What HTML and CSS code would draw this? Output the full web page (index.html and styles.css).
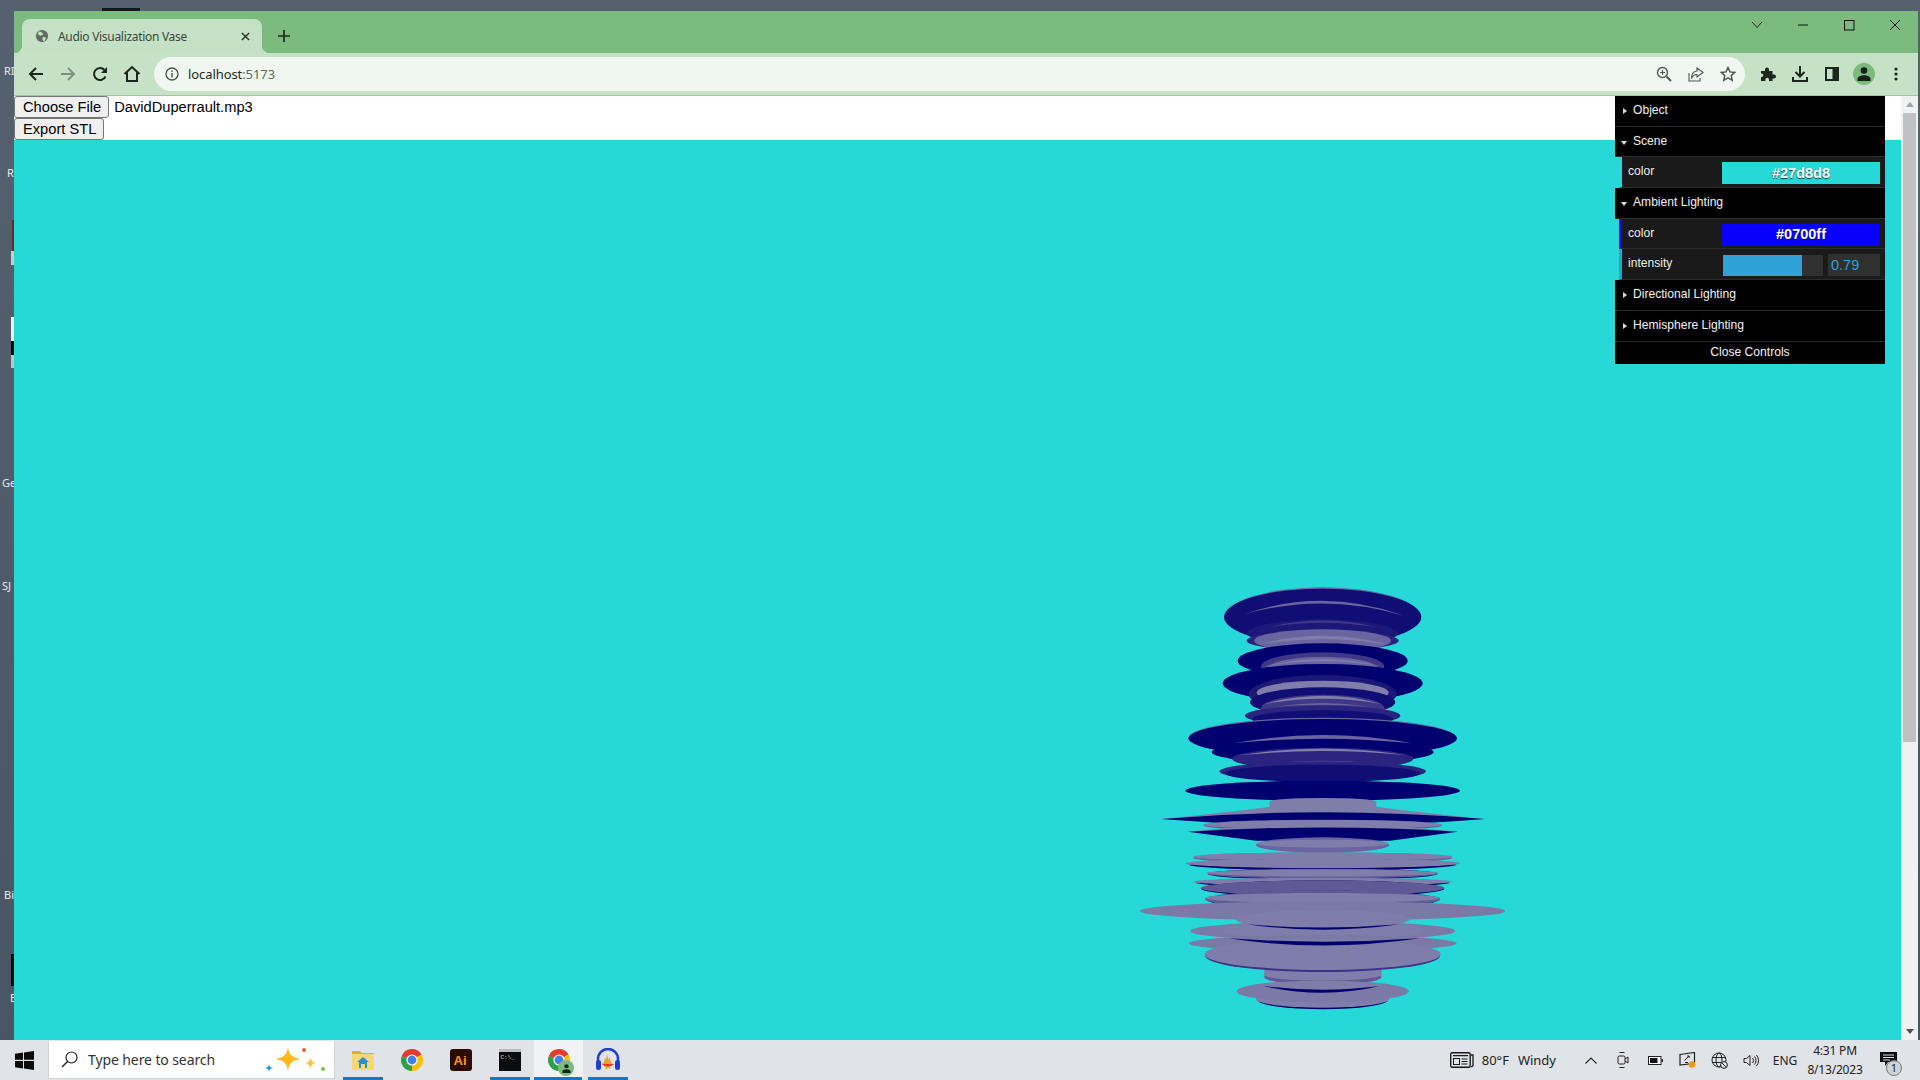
FILE: index.html
```html
<!DOCTYPE html>
<html lang="en">
<head>
<meta charset="utf-8">
<title>Audio Visualization Vase</title>
<link rel="stylesheet" href="styles.css">
</head>
<body>
<svg class="defs" width="0" height="0" aria-hidden="true">
  <symbol id="chrome" viewBox="0 0 24 24">
    <path fill="#e33b2e" d="M12 12L1.66 8.24A11 11 0 0 1 21.53 6.5Z"/>
    <path fill="#f9c10d" d="M12 12L21.53 6.5A11 11 0 0 1 12 23Z"/>
    <path fill="#2fa04a" d="M12 12L12 23A11 11 0 0 1 1.66 8.24Z"/>
    <circle cx="12" cy="12" r="5.6" fill="#fff"/>
    <circle cx="12" cy="12" r="4.4" fill="#3f80ea"/>
  </symbol>
</svg>
<div class="desktop">
  <div class="desk-area">
    <span class="desk-label label-a">RI</span>
    <span class="desk-label label-b">R</span>
    <span class="desk-label label-c">Ge</span>
    <span class="desk-label label-d">SJ</span>
    <span class="desk-label label-e">Bi</span>
    <span class="desk-label label-f">E</span>
    <i class="desk-bit bit-top"></i>
    <i class="desk-bit bit-red"></i>
    <i class="desk-bit bit-white1"></i>
    <i class="desk-bit bit-white2"></i>
    <i class="desk-bit bit-black1"></i>
    <i class="desk-bit bit-white3"></i>
    <i class="desk-bit bit-black2"></i>

    <main class="browser">
      <div class="tabstrip">
        <div class="tab">
          <svg class="favicon" viewBox="0 0 16 16"><circle cx="8" cy="8" r="7" fill="#5f6b63"/><path fill="#c5e1c5" d="M5 2.5l3 1.5 1.500 2-2 1.500-3-.5-1.500-1.500zM9 9l3.500.5-1 3.500-2 1-1-2.500z"/></svg>
          <span class="tab-title">Audio Visualization Vase</span>
          <svg class="tab-close" viewBox="0 0 10 10"><path d="M1 1l8 8M9 1l-8 8" stroke="#2a2f2b" stroke-width="1.600" fill="none"/></svg>
        </div>
        <svg class="new-tab" viewBox="0 0 12 12"><path d="M6 0v12M0 6h12" stroke="#1f2a20" stroke-width="1.700" fill="none"/></svg>
        <div class="win-controls">
          <span class="win-btn"><svg width="12" height="8" viewBox="0 0 12 8"><path d="M1 1l5 5.500L11 1" stroke="#1f2a20" fill="none"/></svg></span>
          <span class="win-btn"><svg width="12" height="2" viewBox="0 0 12 2"><path d="M1 1h10" stroke="#111" fill="none"/></svg></span>
          <span class="win-btn"><svg width="11" height="11" viewBox="0 0 11 11"><rect x=".5" y=".5" width="9.500" height="9.500" stroke="#111" fill="none"/></svg></span>
          <span class="win-btn"><svg width="12" height="12" viewBox="0 0 12 12"><path d="M1 1l10 10M11 1L1 11" stroke="#111" fill="none"/></svg></span>
        </div>
      </div>

      <div class="toolbar">
        <span class="tool"><svg width="16" height="16" viewBox="0 0 16 16"><path d="M15 8H2M8 2L2 8l6 6" stroke="#1d261e" stroke-width="2" fill="none"/></svg></span>
        <span class="tool"><svg width="16" height="16" viewBox="0 0 16 16"><path d="M1 8h13M8 2l6 6-6 6" stroke="#7f8f80" stroke-width="2" fill="none"/></svg></span>
        <span class="tool"><svg width="16" height="16" viewBox="0 0 16 16"><path d="M13.500 10.500A6 6 0 1 1 12.500 4" stroke="#1d261e" stroke-width="2" fill="none"/><path fill="#1d261e" d="M15 1v6H9z"/></svg></span>
        <span class="tool"><svg width="18" height="18" viewBox="0 0 18 18"><path d="M1.500 9L9 2l7.500 7M4 7.500V16h10V7.500" stroke="#1d261e" stroke-width="2" fill="none"/></svg></span>
        <div class="omnibox">
          <svg class="info" width="14" height="14" viewBox="0 0 14 14"><circle cx="7" cy="7" r="6" stroke="#47524a" stroke-width="1.300" fill="none"/><path d="M7 6v4.500M7 3.500v1.500" stroke="#47524a" stroke-width="1.400"/></svg>
          <span class="url">localhost<span class="url-port">:5173</span></span>
          <span class="omni-icon"><svg width="16" height="16" viewBox="0 0 16 16"><circle cx="6.500" cy="6.500" r="5" stroke="#4d5a50" stroke-width="1.400" fill="none"/><path d="M10.500 10.500L15 15" stroke="#4d5a50" stroke-width="2"/><path d="M6.500 4v5M4 6.500h5" stroke="#4d5a50" stroke-width="1.200"/></svg></span>
          <span class="omni-icon"><svg width="16" height="16" viewBox="0 0 16 16"><path d="M1 7v8h11v-3" stroke="#4d5a50" stroke-width="1.100" fill="none"/><path d="M9 2l6 4.500-6 4.500V8.500C6 8.500 4.500 10 3.500 12.500 3.500 8 5.500 5.200 9 5z" stroke="#4d5a50" stroke-width="1.100" fill="none"/></svg></span>
          <span class="omni-icon"><svg width="16" height="16" viewBox="0 0 16 16"><path d="M8 1.500l2 4.400 4.800.5-3.600 3.200 1 4.700L8 11.900l-4.200 2.400 1-4.700L1.200 6.400 6 5.900z" stroke="#4d5a50" stroke-width="1.500" fill="none"/></svg></span>
        </div>
        <span class="tool tool-ext"><svg width="16" height="16" viewBox="0 0 16 16"><path fill="#1d261e" d="M1 5h4V3.500a2 2 0 0 1 4 0V5h3.500v3.500H14a2 2 0 0 1 0 4h-1.500V15H9v-1.500a1.800 1.800 0 0 0-3.600 0V15H1v-4h1.200a2 2 0 0 0 0-3.500H1z"/></svg></span>
        <span class="tool"><svg width="16" height="16" viewBox="0 0 16 16"><path d="M8 0v10M3.500 6L8 10.500 12.500 6" stroke="#1d261e" stroke-width="2" fill="none"/><path d="M1 11v4h14v-4" stroke="#1d261e" stroke-width="2" fill="none"/></svg></span>
        <span class="tool"><svg width="14" height="14" viewBox="0 0 14 14"><rect width="14" height="14" fill="#1d261e"/><rect x="2" y="2" width="5.500" height="10" fill="#c6e2c6"/></svg></span>
        <span class="tool"><span class="avatar"><svg width="14" height="14" viewBox="0 0 14 14"><circle cx="7" cy="3.500" r="3.300" fill="#17221a"/><path fill="#17221a" d="M.5 14v-2c0-2.500 3.500-3.700 6.500-3.700s6.500 1.200 6.500 3.700v2z"/></svg></span></span>
        <span class="tool"><svg width="4" height="14" viewBox="0 0 4 14"><circle cx="2" cy="2" r="1.600" fill="#1d261e"/><circle cx="2" cy="7" r="1.600" fill="#1d261e"/><circle cx="2" cy="12" r="1.600" fill="#1d261e"/></svg></span>
      </div>

      <div class="page">
        <div class="viewport">
          <header class="controls">
            <div class="line"><button class="native-btn" type="button">Choose File</button><span class="file-name">DavidDuperrault.mp3</span></div>
            <div class="line"><button class="native-btn" type="button">Export STL</button></div>
          </header>
          <section class="scene">
            <svg class="vase" viewBox="0 0 1260 1410" aria-label="Audio visualization vase">
              <!-- upper stack -->
              <ellipse class="q" cx="608" cy="138" rx="290" ry="86"/>
              <ellipse class="n" cx="608" cy="141" rx="296" ry="85"/>
              <path class="q" d="M372 133Q608 50 852 137Q608 66 372 133Z"/>
              <ellipse class="c1" cx="608" cy="190" rx="225" ry="42"/>
              <path class="p" d="M445 172Q608 130 772 172Q608 144 445 172Z"/>
              <ellipse class="m" cx="608" cy="212" rx="228" ry="30"/>
              <ellipse class="q" cx="608" cy="212" rx="205" ry="34"/>
              <path class="l" d="M410 225Q608 170 806 225Q608 190 410 225Z"/>

              <ellipse class="d" cx="608" cy="272" rx="255" ry="52"/>
              <ellipse class="p" cx="608" cy="290" rx="185" ry="43"/>
              <ellipse class="q" cx="608" cy="300" rx="170" ry="40"/>
              <path class="l" d="M430 290Q608 244 790 290Q608 258 430 290Z"/>

              <ellipse class="d" cx="608" cy="340" rx="300" ry="58"/>
              <ellipse class="c1" cx="608" cy="372" rx="222" ry="57"/>
              <ellipse class="l" cx="608" cy="368" rx="198" ry="36"/>
              <ellipse class="n" cx="608" cy="396" rx="218" ry="44"/>
              <ellipse class="p" cx="608" cy="414" rx="185" ry="40"/>
              <path class="l" d="M432 402Q608 352 786 402Q608 370 432 402Z"/>
              <path class="q" d="M470 410Q608 388 745 410Q608 398 470 410Z"/>
              <ellipse class="m" cx="608" cy="437" rx="233" ry="30"/>
              <ellipse class="n" cx="608" cy="447" rx="212" ry="26"/>

              <ellipse class="q" cx="608" cy="503" rx="400" ry="60"/>
              <ellipse class="d" cx="608" cy="505" rx="403" ry="58"/>
              <path class="q" d="M340 520Q608 470 878 520Q608 492 340 520Z"/>
              <ellipse class="d" cx="608" cy="546" rx="333" ry="36"/>
              <ellipse class="m" cx="608" cy="566" rx="272" ry="33"/>
              <path class="l" d="M360 556Q608 515 860 556Q608 530 360 556Z"/>
              <path class="q" d="M380 590Q608 555 840 590Q608 570 380 590Z"/>
              <ellipse class="m" cx="608" cy="604" rx="310" ry="30"/>
              <ellipse class="n" cx="608" cy="610" rx="292" ry="26"/>
              <ellipse class="d" cx="608" cy="662" rx="412" ry="30"/>

              <!-- neck and flare -->
              <ellipse class="l" cx="608" cy="695" rx="160" ry="11"/>
              <rect class="l" x="449" y="695" width="320" height="40"/>
              <g transform="translate(0 690)">
                <path class="l" d="M124 57Q400 28 450 20H770Q820 28 1094 57Q608 90 124 57Z"/>
                <path class="d" d="M124 57Q608 17 1094 57Q608 97 124 57Z"/>
                <ellipse class="c2" cx="608" cy="76" rx="358" ry="17"/>
                <ellipse class="l" cx="608" cy="74" rx="358" ry="14"/>
                <path class="l" d="M204 95Q608 50 1014 95Q608 100 204 95Z"/>
                <path class="d" d="M204 95Q608 70 1014 95L810 122H408Z"/>
                <ellipse class="q" cx="608" cy="135" rx="200" ry="23"/>
                <ellipse class="l" cx="608" cy="131" rx="198" ry="12"/>

                <!-- lower plates -->
                <ellipse class="q" cx="608" cy="174" rx="389" ry="17"/>
                <ellipse class="l" cx="608" cy="170" rx="389" ry="13"/>
                <ellipse class="d" cx="608" cy="194" rx="400" ry="17"/>
                <ellipse class="l" cx="608" cy="190" rx="413" ry="14"/>
                <ellipse class="d" cx="608" cy="222" rx="344" ry="17"/>
                <ellipse class="c2" cx="608" cy="221" rx="346" ry="15"/>
                <ellipse class="l" cx="608" cy="219" rx="346" ry="11"/>
                <ellipse class="d" cx="608" cy="248" rx="380" ry="14"/>
                <ellipse class="l" cx="608" cy="245" rx="388" ry="12"/>
                <ellipse class="d" cx="608" cy="266" rx="365" ry="25"/>
                <ellipse class="c2" cx="608" cy="264" rx="365" ry="23"/>
                <ellipse class="d" cx="608" cy="300" rx="345" ry="28"/>
                <ellipse class="c2" cx="608" cy="298" rx="353" ry="27"/>
                <ellipse class="l" cx="608" cy="294" rx="353" ry="15"/>

                <!-- foot: painted first so the big plates lie over its top -->
                <ellipse class="d" cx="608" cy="600" rx="195" ry="28"/>
                <ellipse class="l" cx="608" cy="597" rx="200" ry="26"/>
                <ellipse class="l2" cx="608" cy="574" rx="258" ry="33"/>
                <rect class="l" x="433" y="505" width="352" height="30"/>
                <ellipse class="c2" cx="608" cy="532" rx="175" ry="22"/>
                <ellipse class="l" cx="608" cy="524" rx="175" ry="18"/>
                <ellipse class="l" cx="608" cy="556" rx="175" ry="14"/>
                <path class="d" d="M430 558Q608 598 780 558Q608 580 430 558Z"/>

                <!-- wide pale plates -->
                <ellipse class="l2" cx="608" cy="333" rx="548" ry="29"/>
                <ellipse class="l" cx="608" cy="358" rx="260" ry="29"/>
                <ellipse class="l2" cx="608" cy="393" rx="398" ry="29"/>
                <ellipse class="l" cx="608" cy="390" rx="300" ry="30"/>
                <path class="d" d="M380 373Q608 405 840 373Q608 392 380 373Z"/>
                <ellipse class="l2" cx="608" cy="430" rx="402" ry="25"/>
                <ellipse class="c3" cx="608" cy="468" rx="352" ry="48"/>
                <ellipse class="l" cx="608" cy="463" rx="354" ry="47"/>
                <path class="d" d="M325 415Q608 458 900 415Q608 435 325 415Z"/>
              </g>
            </svg>
          </section>

          <aside class="gui">
            <div class="folder">Object</div>
            <div class="folder open folder-short">Scene</div>
            <ul class="rows">
              <li class="row row-teal"><span class="row-label">color</span><span class="swatch swatch-teal">#27d8d8</span></li>
            </ul>
            <div class="folder open">Ambient Lighting</div>
            <ul class="rows">
              <li class="row row-blue"><span class="row-label">color</span><span class="swatch swatch-blue">#0700ff</span></li>
              <li class="row row-number">
                <span class="row-label">intensity</span>
                <span class="slider"><span class="slider-fg"></span></span>
                <span class="number">0.79</span>
              </li>
            </ul>
            <div class="folder">Directional Lighting</div>
            <div class="folder">Hemisphere Lighting</div>
            <div class="close-btn">Close Controls</div>
          </aside>
        </div>
        <div class="scrollbar">
          <span class="arrow arrow-up"></span>
          <span class="thumb"></span>
          <span class="arrow arrow-down"></span>
        </div>
      </div>
    </main>
  </div>

  <footer class="taskbar">
    <span class="start"><svg width="19" height="19" viewBox="0 0 19 19"><path fill="#0b0b0b" d="M0 2.700L8 1.500v7.300H0zM9 1.400L19 0v8.800H9zM0 10h8v7.400L0 16.300zM9 10h10v9L9 17.600z"/></svg></span>
    <div class="search">
      <svg width="17" height="17" viewBox="0 0 17 17"><circle cx="10.500" cy="6.500" r="5.500" stroke="#222" stroke-width="1.200" fill="none"/><path d="M6.500 10.500L1 16" stroke="#222" stroke-width="1.400"/></svg>
      <span class="search-text">Type here to search</span>
      <svg class="sparkles" width="62" height="36" viewBox="0 0 62 36">
        <path fill="#fbb81f" d="M25 5c1 7.500 4 10.500 12 12-8 1.500-11 4.500-12 12-1-7.500-4-10.500-12-12 8-1.500 11-4.500 12-12z"/>
        <path fill="#fbc53f" d="M47.500 15c.6 4 1.800 5.200 5.500 6-3.700.8-4.900 2-5.500 6-.6-4-1.800-5.200-5.500-6 3.700-.8 4.900-2 5.500-6z"/>
        <path fill="#2196e8" d="M6 22c.4 2.700 1.300 3.500 4 4-2.700.5-3.600 1.300-4 4-.4-2.700-1.300-3.500-4-4 2.700-.5 3.600-1.300 4-4z"/>
        <circle cx="41" cy="8" r="2" fill="#e9603a"/>
        <circle cx="60" cy="27" r="2" fill="#7cc14a"/>
      </svg>
    </div>
    <div class="apps">
      <span class="app app-run"><svg width="22" height="20" viewBox="0 0 22 20"><path fill="#e8a832" d="M0 1h8l2 2h12v4H0z"/><rect y="4" width="22" height="16" fill="#f8d775"/><path fill="#2b8fd8" d="M11 7l6 5h-2v6H7v-6H5z"/><rect x="9" y="14" width="4" height="4" fill="#f8d775"/></svg></span>
      <span class="app"><svg width="24" height="24"><use href="#chrome"/></svg></span>
      <span class="app"><svg width="22" height="22" viewBox="0 0 22 22"><rect width="22" height="22" rx="3" fill="#2b0a00"/><text class="ai-text" x="3.500" y="16">Ai</text></svg></span>
      <span class="app app-run"><svg width="22" height="22" viewBox="0 0 22 22"><rect width="22" height="22" fill="#0c0c0c"/><rect width="22" height="3" fill="#bdbdbd"/><text class="term-text" x="1.500" y="10">C:\_</text></svg></span>
      <span class="app app-run app-active"><svg class="chrome-badged" width="24" height="24"><use href="#chrome"/></svg><span class="badge"><svg width="9" height="9" viewBox="0 0 14 14"><circle cx="7" cy="3.500" r="3.300" fill="#17221a"/><path fill="#17221a" d="M.5 14v-2c0-2.500 3.500-3.700 6.500-3.700s6.500 1.200 6.500 3.700v2z"/></svg></span></span>
      <span class="app app-run"><svg width="26" height="24" viewBox="0 0 26 24"><path d="M3 15V11a10 10 0 0 1 20 0v4" stroke="#1c3fd0" stroke-width="2.500" fill="none"/><rect x="1" y="12" width="5" height="10" rx="2.500" fill="#1c3fd0"/><rect x="20" y="12" width="5" height="10" rx="2.500" fill="#1c3fd0"/><path fill="#f2a11f" d="M7 16l2-2 1-4 1 2 1-6 1.500 6 1-3 1 4 2 3-2 2-1 3-1.500-1.500L11 22l-1-3z"/><path fill="#e2382c" d="M7 16h12l-2 1.500-4 1-4-1z"/></svg></span>
    </div>
    <div class="tray">
      <div class="weather">
        <svg width="24" height="16" viewBox="0 0 24 16"><rect x=".7" y=".7" width="19.500" height="14.600" rx="1.500" stroke="#1a1a1a" stroke-width="1.400" fill="none"/><path d="M21 3h2v10.500a1.500 1.500 0 0 1-2 1" stroke="#1a1a1a" stroke-width="1.300" fill="none"/><rect x="3.500" y="6.500" width="6" height="6" stroke="#1a1a1a" fill="none"/><path d="M3 3.700h15M11.500 7h6M11.500 9.500h6M11.500 12h6" stroke="#1a1a1a" stroke-width="1.200"/></svg>
        <span class="temp">80°F</span>
        <span class="wind">Windy</span>
      </div>
      <span class="tray-icon"><svg width="12" height="7" viewBox="0 0 12 7"><path d="M.5 6.500L6 1l5.500 5.500" stroke="#222" stroke-width="1.100" fill="none"/></svg></span>
      <span class="tray-icon"><svg width="12" height="18" viewBox="0 0 12 18"><rect x="1" y="5" width="7" height="8" rx="1.500" stroke="#222" fill="none"/><path d="M8 8l3-2v6l-3-2M2.500 1.500h5M2.500 16.500h5" stroke="#222" fill="none"/></svg></span>
      <span class="tray-icon"><svg width="15" height="9" viewBox="0 0 15 9"><rect x=".5" y=".5" width="12.500" height="8" stroke="#222" fill="#fff"/><rect x="2" y="2" width="7.500" height="5" fill="#111"/><rect x="13.500" y="3" width="1.500" height="3" fill="#222"/></svg></span>
      <span class="tray-icon"><svg width="17" height="16" viewBox="0 0 17 16"><path d="M1 2.500L15.500.5v10.800L1 13z" stroke="#222" stroke-width="1.200" fill="none"/><path d="M5.500 8.500L10 4M8 4h2.200v2M6 10.500h3" stroke="#222" fill="none"/><circle cx="13" cy="12.500" r="3.300" fill="#f59a0c"/></svg></span>
      <span class="tray-icon"><svg width="17" height="17" viewBox="0 0 17 17"><circle cx="8" cy="8" r="7" stroke="#222" fill="none"/><ellipse cx="8" cy="8" rx="3" ry="7" stroke="#222" fill="none"/><path d="M1 5.500h14M1 10.500h14" stroke="#222" fill="none"/><circle cx="13" cy="13" r="3.400" fill="#e0e3e8" stroke="#222"/><path d="M11 11l4 4" stroke="#222"/></svg></span>
      <span class="tray-icon"><svg width="16" height="13" viewBox="0 0 16 13"><path d="M1 4.500h2.500L7 1.500v10L3.500 8.500H1z" stroke="#222" fill="none"/><path d="M9.500 4a3.500 3.500 0 0 1 0 5M11.500 2.500a6 6 0 0 1 0 8M13.500 1a8.500 8.500 0 0 1 0 11" stroke="#222" fill="none"/></svg></span>
      <span class="lang">ENG</span>
      <span class="clock"><span>4:31 PM</span><span>8/13/2023</span></span>
      <span class="notify">
        <svg width="17" height="14" viewBox="0 0 17 14"><path fill="#0b0b0b" d="M0 0h17v10H8l-3 4v-4H0z"/><path d="M3 3h11M3 5.500h11M3 8h7" stroke="#e0e3e8"/></svg>
        <span class="notify-count">1</span>
      </span>
    </div>
  </footer>
</div>
</body>
</html>
```

FILE: styles.css
```css
* { box-sizing: border-box; }
html, body { margin: 0; height: 100%; overflow: hidden; }
body { font-family: "Liberation Sans", Arial, sans-serif; }
.defs { position: absolute; }

.desktop { width: 1920px; height: 1080px; display: flex; flex-direction: column; background: linear-gradient(#56616f, #4a5563); }
.desk-area { position: relative; flex: 1; min-height: 0; padding: 11px 2px 0 14px; display: flex; }

.desk-label { position: absolute; left: 4px; font: 11px "Noto Sans", sans-serif; color: #e6e9ee; white-space: nowrap; }
.label-a { top: 63px; }
.label-b { top: 165px; left: 7px; }
.label-c { top: 475px; left: 2px; }
.label-d { top: 578px; left: 2px; }
.label-e { top: 887px; }
.label-f { top: 990px; left: 10px; }
.desk-bit { position: absolute; display: block; }
.bit-top { left: 102px; top: 8px; width: 38px; height: 3px; background: #14181d; }
.bit-red { left: 12px; top: 220px; width: 2px; height: 31px; background: #6b2a2a; }
.bit-white1 { left: 11px; top: 251px; width: 3px; height: 14px; background: #c9ccd0; }
.bit-white2 { left: 11px; top: 317px; width: 3px; height: 24px; background: #eceef0; }
.bit-black1 { left: 11px; top: 341px; width: 3px; height: 14px; background: #0b0b0b; }
.bit-white3 { left: 11px; top: 355px; width: 3px; height: 13px; background: #c0c3c7; }
.bit-black2 { left: 11px; top: 954px; width: 3px; height: 32px; background: #0b0b0b; }

.browser { position: relative; flex: 1; min-width: 0; display: flex; flex-direction: column; }

.tabstrip { height: 42px; flex: none; display: flex; align-items: flex-start; padding: 8px 0 0 8px; background: #7bbb7e; }
.tab { position: relative; width: 240px; height: 34px; display: flex; align-items: center; padding: 0 12px 0 13px; background: #c5e1c5; border-radius: 8px 8px 0 0; }
.tab::before, .tab::after { content: ""; position: absolute; bottom: 0; width: 8px; height: 8px; }
.tab::before { left: -8px; background: radial-gradient(circle at 0 0, transparent 8px, #c5e1c5 8.500px); }
.tab::after { right: -8px; background: radial-gradient(circle at 100% 0, transparent 8px, #c5e1c5 8.500px); }
.favicon { width: 14px; height: 14px; flex: none; }
.tab-title { flex: 1; margin-left: 9px; font: 12px "Noto Sans", sans-serif; letter-spacing: -.3px; color: #3b463d; white-space: nowrap; }
.tab-close { width: 9px; height: 9px; flex: none; }
.new-tab { width: 12px; height: 12px; margin: 11px 0 0 16px; flex: none; }
.win-controls { margin-left: auto; margin-top: -8px; display: flex; }
.win-btn { width: 46px; height: 28px; display: flex; align-items: center; justify-content: center; }

.toolbar { height: 43px; flex: none; display: flex; align-items: center; padding: 0 6px 1px 6px; background: #c6e2c6; border-bottom: 1px solid #a6c4a8; }
.tool { width: 32px; height: 32px; flex: none; display: flex; align-items: center; justify-content: center; }
.tool-ext { margin-left: 7px; }
.omnibox { flex: 1; height: 34px; margin-left: 6px; display: flex; align-items: center; padding: 0 1px 0 11px; border-radius: 17px; background: #f0f6f0; }
.info { flex: none; }
.url { flex: 1; margin-left: 9px; font: 13px "Noto Sans", sans-serif; letter-spacing: -.08px; color: #1f2a22; }
.url-port { color: #5c6a60; }
.omni-icon { width: 32px; height: 32px; flex: none; display: flex; align-items: center; justify-content: center; }
.avatar { width: 22px; height: 22px; border-radius: 50%; background: #7bbb7e; display: flex; align-items: center; justify-content: center; }

.page { flex: 1; min-height: 0; display: flex; }
.viewport { position: relative; flex: 1; min-width: 0; display: flex; flex-direction: column; background: #fff; }
.controls { flex: none; height: 44px; }
.line { height: 22px; display: flex; align-items: center; }
.native-btn { height: 22px; padding: 1px 7px 1px 8px; font: 14.670px "Liberation Sans", Arial, sans-serif; color: #000; background: #efefef; border: 1px solid #767676; border-radius: 3px; }
.file-name { margin-left: 5px; font-size: 14.670px; color: #000; }
.scene { position: relative; flex: 1; background: #27d8d8; }
.vase { position: absolute; left: 1106px; top: 430px; width: 420px; height: 470px; }
.vase .d { fill: #00006e; }
.vase .n { fill: #100e74; }
.vase .c1 { fill: #1c1878; }
.vase .m { fill: #2a2480; }
.vase .p { fill: #3e3886; }
.vase .c3 { fill: #3a3488; }
.vase .q { fill: #6a64a0; }
.vase .c2 { fill: #5f5a96; }
.vase .l { fill: #7f7da9; }
.vase .l2 { fill: #7b79a6; }

.gui { position: absolute; top: 0; right: 16px; width: 270px; font: 12.100px/1 "Liberation Sans", Arial, sans-serif; color: #eee; text-shadow: 0 -1px 0 #111; }
.folder { position: relative; height: 31px; display: flex; align-items: center; padding: 0 0 2px 18px; background: #000; border-bottom: 1px solid #2c2c2c; }
.folder-short { height: 30px; padding-bottom: 0; }
.folder::before { content: ""; position: absolute; left: 8px; top: 12px; border-left: 4px solid #ddd; border-top: 3px solid transparent; border-bottom: 3px solid transparent; }
.folder.open::before { left: 6px; top: 14px; border-top: 4px solid #ddd; border-left: 3.500px solid transparent; border-right: 3.500px solid transparent; border-bottom: 0; }
.rows { list-style: none; margin: 0 0 0 4px; padding: 0; }
.row { height: 31px; display: flex; align-items: center; padding: 2px 5px 0 6px; background: #1a1a1a; border-left: 3px solid; border-bottom: 1px solid #2c2c2c; }
.row-teal { border-left-color: #27d8d8; }
.row-blue { height: 30px; border-left-color: #0700ff; }
.row-number { border-left-color: #2fa1d6; height: 31px; }
.row-label { width: 94px; flex: none; margin-bottom: 3px; }
.swatch { flex: 1; height: 22px; display: flex; align-items: center; justify-content: center; font-size: 14.500px; font-weight: 700; color: #fff; text-shadow: 0 1px 1px rgba(0,0,0,.7); }
.swatch-teal { background: #27d8d8; }
.swatch-blue { background: #0700ff; }
.slider { width: 100px; height: 21px; margin-left: 1px; background: #303030; flex: none; display: block; }
.slider-fg { display: block; width: 79%; height: 100%; background: #2fa1d6; }
.number { flex: 1; height: 22px; margin-left: 5px; padding-left: 3px; display: flex; align-items: center; font-size: 14.500px; color: #2fa1d6; background: #303030; text-shadow: none; }
.close-btn { height: 22px; padding-bottom: 2px; display: flex; align-items: center; justify-content: center; background: #000; }

.scrollbar { width: 17px; flex: none; display: flex; flex-direction: column; align-items: center; background: #f1f1f1; }
.arrow { flex: none; width: 0; height: 0; border-left: 4.500px solid transparent; border-right: 4.500px solid transparent; }
.arrow-up { margin-top: 6px; border-bottom: 5px solid #a3a3a3; }
.thumb { width: 13px; height: 629px; margin-top: 6px; background: #c1c1c1; }
.arrow-down { margin: auto 0 6px; border-top: 5px solid #505050; }

.taskbar { height: 40px; flex: none; display: flex; align-items: center; background: #e0e3e8; }
.start { width: 48px; flex: none; display: flex; justify-content: center; }
.search { width: 287px; height: 38px; flex: none; display: flex; align-items: center; padding-left: 12px; margin-right: 3px; background: #fff; border: 1px solid #cfd2d6; border-width: 0 1px 1px; }
.search-text { flex: 1; margin-left: 10px; font: 14px "Noto Sans", sans-serif; letter-spacing: -.1px; color: #333; white-space: nowrap; }
.sparkles { margin-right: 9px; flex: none; }
.apps { display: flex; height: 40px; }
.app { position: relative; width: 49px; height: 40px; display: flex; align-items: center; justify-content: center; }
.app-run::after { content: ""; position: absolute; left: 5px; right: 4px; bottom: 0; height: 3px; background: #0a78d4; }
.app-active { background: #f0f2f5; }
.app-active::after { left: 0; right: 1px; }
.ai-text { font: 700 13px "Liberation Sans", sans-serif; fill: #ff9a00; }
.term-text { font: 6px "Liberation Mono", monospace; fill: #ddd; }
.badge { position: absolute; left: 24px; top: 20px; width: 16px; height: 16px; border-radius: 50%; background: #7bbb7e; display: flex; align-items: center; justify-content: center; }

.tray { margin-left: auto; display: flex; align-items: center; height: 40px; padding-right: 11px; }
.weather { display: flex; align-items: center; margin-right: 19px; font: 13px "Noto Sans", sans-serif; color: #222; }
.temp { margin-left: 8px; }
.wind { margin-left: 9px; }
.tray-icon { width: 32px; height: 40px; display: flex; align-items: center; justify-content: center; }
.lang { width: 36px; text-align: center; font: 12px "Noto Sans", sans-serif; color: #222; }
.clock { width: 64px; display: flex; flex-direction: column; align-items: center; gap: 3px; font: 12px/16px "Noto Sans", sans-serif; letter-spacing: -.2px; color: #222; }
.notify { position: relative; width: 42px; height: 40px; display: flex; align-items: center; justify-content: center; }
.notify svg { margin-top: -2px; }
.notify-count { position: absolute; left: 19px; top: 20px; width: 16px; height: 16px; border: 1.500px solid #777; border-radius: 50%; background: rgba(204,208,213,.85); font: 11px/13px "Noto Sans", sans-serif; text-align: center; color: #222; }
```
